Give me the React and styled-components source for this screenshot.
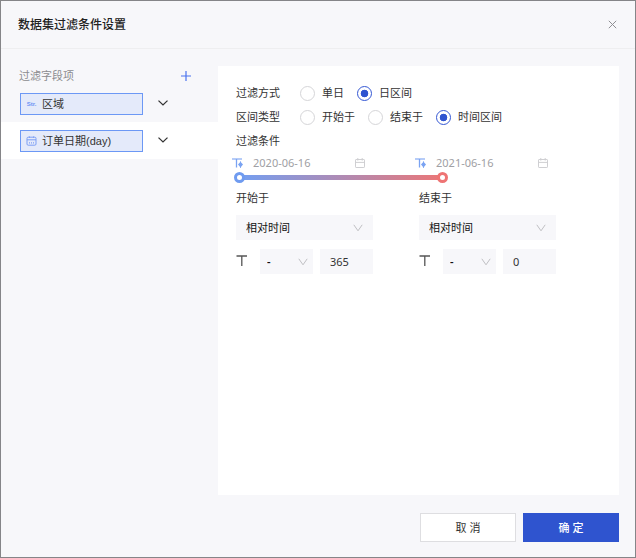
import React, { useState } from 'react';
import styled, { createGlobalStyle } from 'styled-components';

const START_OPTIONS = ['相对时间', '绝对时间'];
const SIGNS = ['-', '+'];

const fields = [
  { id: 'area', name: '区域', type: 'string' },
  { id: 'orderDate', name: '订单日期(day)', type: 'date' },
];

const CloseIcon = () => (
  <svg width='9' height='9' viewBox='0 0 9 9' fill='none' stroke='#8e8e93'>
    <path d='M.8 .8l7.4 7.4M8.2 .8L.8 8.2' />
  </svg>
);

const PlusIcon = () => (
  <svg width='10' height='10' viewBox='0 0 10 10' fill='none' stroke='#4a72ee' strokeWidth='1.2'>
    <path d='M5 0v10M0 5h10' />
  </svg>
);

const MoreIcon = () => (
  <svg width='10' height='6' viewBox='0 0 10 6' fill='none' stroke='#333' strokeWidth='1.3'>
    <path d='M.5 .6L5 4.9L9.5 .6' />
  </svg>
);

const ArrowIcon = () => (
  <svg width='10' height='8' viewBox='0 0 10 8' fill='none' stroke='#bfbfc3'>
    <path d='M.8 .8L5 6.8L9.2 .8' />
  </svg>
);

const FieldDateIcon = () => (
  <svg width='11' height='10' viewBox='0 0 11 10' fill='none' stroke='#7d9ff5'>
    <rect x='1' y='1.2' width='9' height='8' rx='1.2' />
    <path d='M1 3.8h9M3.4 .4v1.6M7.6 .4v1.6' />
    <path d='M3 6.8h1M5 6.8h1M7 6.8h1' strokeWidth='1.2' />
  </svg>
);

const CalendarIcon = () => (
  <svg width='10' height='10' viewBox='0 0 10 10' fill='none' stroke='#cfcfd2'>
    <rect x='.5' y='1.5' width='9' height='8' rx='.6' />
    <path d='M.5 4.4h9M2.8 0v2.6M7.2 0v2.6' />
  </svg>
);

const RelativeIcon = () => (
  <svg width='11' height='10' viewBox='0 0 11 10' fill='none' stroke='#7aa3f2'>
    <path d='M0 1h10' strokeWidth='1.1' />
    <path d='M4.5 1v8.5' strokeWidth='1.3' />
    <path d='M8.5 3.4v6.4' />
    <path d='M8.5 3.8l2.5 2.8l-2.5 2.8l-2.5-2.8z' fill='#7aa3f2' stroke='none' />
  </svg>
);

const OffsetIcon = () => (
  <svg width='12' height='11' viewBox='0 0 12 11' fill='none' stroke='#555' strokeWidth='1.3'>
    <path d='M.5 1h10.5M5.8 1v10' />
  </svg>
);

const RadioRow = ({ label, name, options, value, onChange }) => (
  <Row>
    <legend>{label}</legend>
    <div className='options'>
      {options.map((option) => (
        <label key={option}>
          <input
            type='radio'
            name={name}
            checked={value === option}
            onChange={() => onChange(option)}
          />
          {option}
        </label>
      ))}
    </div>
  </Row>
);

const Select = ({ label, options, ...rest }) => (
  <SelectBox>
    <select aria-label={label} {...rest}>
      {options.map((option) => (
        <option key={option}>{option}</option>
      ))}
    </select>
    <ArrowIcon />
  </SelectBox>
);

const DateField = ({ label, date }) => (
  <StyledDate>
    <RelativeIcon />
    <input type='text' aria-label={label} defaultValue={date} />
    <CalendarIcon />
  </StyledDate>
);

const Bound = ({ title, offset }) => (
  <StyledBound>
    <h3>{title}</h3>
    <Select label={title} options={START_OPTIONS} />
    <div className='offset'>
      <OffsetIcon />
      <Select label={`${title} 符号`} options={SIGNS} />
      <NumberInput type='text' aria-label={`${title} 天数`} defaultValue={offset} />
    </div>
  </StyledBound>
);

const App = () => {
  const [active, setActive] = useState('orderDate');
  const [mode, setMode] = useState('日区间');
  const [rangeType, setRangeType] = useState('时间区间');
  const [from, setFrom] = useState(0);
  const [to, setTo] = useState(100);

  return (
    <>
      <GlobalStyle />
      <Dialog role='dialog' aria-labelledby='dialog-title'>
        <Header>
          <h1 id='dialog-title'>数据集过滤条件设置</h1>
          <IconButton aria-label='关闭'>
            <CloseIcon />
          </IconButton>
        </Header>

        <Content>
          <Sidebar>
            <div className='heading'>
              <h2>过滤字段项</h2>
              <IconButton aria-label='添加'>
                <PlusIcon />
              </IconButton>
            </div>
            {fields.map(({ id, name, type }) => (
              <FieldRow key={id} $active={active === id}>
                <FieldButton onClick={() => setActive(id)}>
                  {type === 'date' ? <FieldDateIcon /> : <span className='type'>Str.</span>}
                  <span>{name}</span>
                </FieldButton>
                <IconButton aria-label='更多'>
                  <MoreIcon />
                </IconButton>
              </FieldRow>
            ))}
          </Sidebar>

          <Panel>
            <RadioRow
              label='过滤方式'
              name='mode'
              options={['单日', '日区间']}
              value={mode}
              onChange={setMode}
            />
            <RadioRow
              label='区间类型'
              name='rangeType'
              options={['开始于', '结束于', '时间区间']}
              value={rangeType}
              onChange={setRangeType}
            />
            <SectionTitle>过滤条件</SectionTitle>

            <Timeline>
              <div className='dates'>
                <DateField label='开始日期' date='2020-06-16' />
                <DateField label='结束日期' date='2021-06-16' />
              </div>
              <RangeSlider>
                <div className='track' />
                <Handle
                  type='range'
                  aria-label='开始'
                  $color='#6f9bf0'
                  value={from}
                  onChange={(e) => setFrom(Math.min(Number(e.target.value), to))}
                />
                <Handle
                  type='range'
                  aria-label='结束'
                  $color='#ee7474'
                  value={to}
                  onChange={(e) => setTo(Math.max(Number(e.target.value), from))}
                />
              </RangeSlider>
            </Timeline>

            <Bounds>
              <Bound title='开始于' offset='365' />
              <Bound title='结束于' offset='0' />
            </Bounds>
          </Panel>
        </Content>

        <Footer>
          <Button>取 消</Button>
          <Button $primary>确 定</Button>
        </Footer>
      </Dialog>
    </>
  );
};

const GlobalStyle = createGlobalStyle`
  * {
    box-sizing: border-box;
    margin: 0;
    padding: 0;
  }

  body {
    background: #f7f7fa;
    color: #333;
    font-size: 11px;
    line-height: 16px;
    font-family: 'Noto Sans', 'Noto Sans CJK SC', sans-serif;
  }

  button,
  input,
  select {
    font: inherit;
    color: inherit;
  }

  button {
    cursor: pointer;
  }

  svg {
    display: block;
    flex: none;
  }
`;

const Dialog = styled.div`
  display: flex;
  flex-direction: column;
  min-height: 100vh;
  border: 1px solid #858588;
`;

const Header = styled.header`
  display: flex;
  justify-content: space-between;
  align-items: center;
  height: 48px;
  padding: 0 18px 0 17px;
  border-bottom: 1px solid #eeeef0;

  h1 {
    padding-bottom: 2px;
    font-size: 12px;
    font-weight: 500;
    font-family: 'Noto Sans CJK SC', sans-serif;
    color: #222;
  }
`;

const IconButton = styled.button`
  display: flex;
  background: none;
  border: none;
`;

const Content = styled.div`
  flex: 1;
  display: flex;
  padding: 17px 16px 0 0;
`;

const Sidebar = styled.aside`
  flex: none;
  width: 217px;

  .heading {
    display: flex;
    align-items: center;
    justify-content: space-between;
    height: 19px;
    padding: 0 27px 0 18px;
  }

  h2 {
    font-size: 11px;
    font-weight: 400;
    color: #8c8c90;
  }
`;

const FieldRow = styled.div`
  display: flex;
  align-items: center;
  gap: 15px;
  height: 37px;
  padding-left: 19px;
  background: ${({ $active }) => ($active ? '#fff' : 'none')};

  > button:last-child {
    padding-bottom: 2px;
  }
`;

const FieldButton = styled.button`
  display: flex;
  align-items: center;
  gap: 5px;
  width: 123px;
  height: 22px;
  padding: 0 5px;
  background: #e4eafa;
  border: 1px solid #6c98f5;
  font-family: 'Liberation Sans', 'Noto Sans CJK SC', sans-serif;

  .type {
    width: 11px;
    font-weight: bold;
    font-size: 6px;
    color: #6c92f4;
  }
`;

const Panel = styled.main`
  flex: 1;
  padding: 15px 18px;
  background: #fff;
`;

const Row = styled.fieldset`
  display: flex;
  align-items: center;
  height: 24px;
  border: none;

  legend {
    float: left;
    width: 64px;
    line-height: 24px;
  }

  .options {
    display: flex;
    gap: 13px;
  }

  label {
    display: flex;
    align-items: center;
    gap: 7px;
    height: 24px;
  }

  input {
    appearance: none;
    width: 15px;
    height: 15px;
    border: 1px solid #d5d5d8;
    border-radius: 50%;
    background: #fff;
  }

  input:checked {
    border-color: #3558d4;
    background: radial-gradient(circle, #2f54d0 55%, #fff 65%) center / 9px 9px no-repeat;
  }
`;

const SectionTitle = styled.h3`
  font-size: 11px;
  font-weight: 400;
  line-height: 24px;
`;

const Timeline = styled.section`
  margin-left: -4px;

  .dates {
    display: flex;
    gap: 50px;
  }
`;

const StyledDate = styled.div`
  display: flex;
  align-items: center;
  width: 133px;
  height: 19px;

  input {
    flex: 1;
    min-width: 0;
    padding-left: 10px;
    border: none;
    outline: none;
    background: none;
    color: #a0a0a4;
  }
`;

const RangeSlider = styled.div`
  display: grid;
  align-items: center;
  width: 214px;
  height: 11px;
  margin-left: 2px;

  > * {
    grid-area: 1 / 1;
  }

  .track {
    height: 5px;
    margin: 0 4px;
    background: linear-gradient(90deg, #729ff2, #ec7676);
  }
`;

const Handle = styled.input`
  appearance: none;
  width: 100%;
  height: 11px;
  background: none;
  pointer-events: none;

  &::-webkit-slider-thumb {
    appearance: none;
    width: 11px;
    height: 11px;
    border: 3px solid ${({ $color }) => $color};
    border-radius: 50%;
    background: #fff;
    pointer-events: auto;
    cursor: pointer;
  }
`;

const Bounds = styled.section`
  display: flex;
  gap: 46px;
`;

const StyledBound = styled.div`
  display: flex;
  flex-direction: column;
  gap: 9px;
  width: 137px;
  padding-top: 7px;

  h3 {
    font-size: 11px;
    font-weight: 400;
  }

  .offset {
    display: grid;
    grid-template-columns: 17px 1fr 1fr;
    gap: 7px;
    align-items: center;
  }

  .offset > svg {
    margin-bottom: 3px;
  }
`;

const SelectBox = styled.div`
  display: grid;
  align-items: center;

  > * {
    grid-area: 1 / 1;
  }

  select {
    appearance: none;
    width: 100%;
    height: 25px;
    padding: 0 24px 0 10px;
    border: none;
    border-radius: 0;
    background: #f7f7fa;
    color: #111;
  }

  svg {
    justify-self: end;
    margin-right: 10px;
    pointer-events: none;
  }

  .offset & select {
    padding: 0 14px 0 7px;
    font-weight: 600;
  }

  .offset & svg {
    margin-right: 5px;
  }
`;

const NumberInput = styled.input`
  width: 100%;
  height: 25px;
  padding: 0 10px;
  border: none;
  background: #f7f7fa;
`;

const Footer = styled.footer`
  display: flex;
  justify-content: flex-end;
  gap: 7px;
  padding: 18px 16px 15px;
`;

const Button = styled.button`
  width: 96px;
  height: 29px;
  border: 1px solid ${({ $primary }) => ($primary ? '#2f54cf' : '#dedee1')};
  background: ${({ $primary }) => ($primary ? '#2f54cf' : '#fff')};
  color: ${({ $primary }) => ($primary ? '#fff' : '#333')};
  font-weight: ${({ $primary }) => ($primary ? 500 : 400)};
`;

export default App;
